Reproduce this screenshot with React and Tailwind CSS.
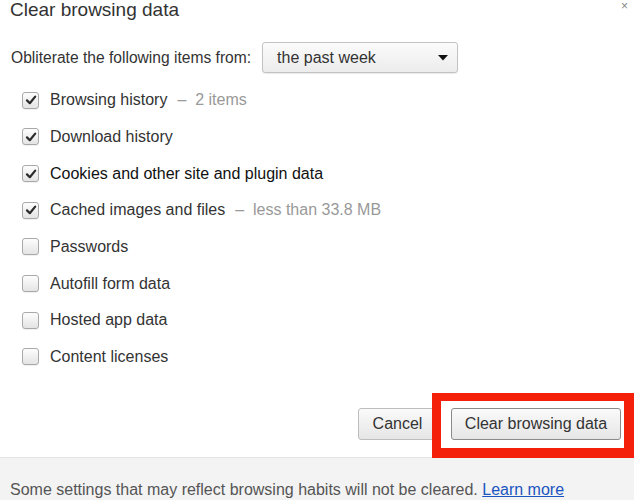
import { useState } from 'react';

const ITEMS = [
  { label: 'Browsing history', note: '2 items', checked: true },
  { label: 'Download history', checked: true },
  { label: 'Cookies and other site and plugin data', checked: true, dark: true },
  { label: 'Cached images and files', note: 'less than 33.8 MB', checked: true },
  { label: 'Passwords', checked: false },
  { label: 'Autofill form data', checked: false },
  { label: 'Hosted app data', checked: false },
  { label: 'Content licenses', checked: false },
];

function Checkbox({ checked }) {
  return (
    <span className="w-[17px] h-[17px] shrink-0 rounded-[3px] border border-[#a9a9a9] bg-gradient-to-b from-[#fdfdfd] to-[#e4e4e4] shadow-[0_1px_0_rgba(0,0,0,0.06)] flex items-center justify-center">
      {checked && (
        <svg width="12" height="12" viewBox="0 0 12 12">
          <path d="M2 6.4 L4.8 9.2 L10.2 2.6" fill="none" stroke="#2b2b2b" strokeWidth="2.2" strokeLinecap="round" strokeLinejoin="round" />
        </svg>
      )}
    </span>
  );
}

export default function App() {
  const [items] = useState(ITEMS);

  return (
    <div
      className="relative w-[634px] h-[500px] overflow-hidden bg-white flex flex-col text-[#333]"
      style={{ fontFamily: '"Liberation Sans", Arial, sans-serif' }}
    >
      {/* title */}
      <div className="flex items-start justify-between pl-[10px] pr-[6px] h-[18px]">
        <h1 className="text-[19px] leading-[20px] text-[#333]">Clear browsing data</h1>
        <span className="text-[12px] leading-[12px] text-[#888]">×</span>
      </div>

      {/* time range */}
      <div className="flex items-center mt-[24px] pl-[11px] h-[31px]">
        <span className="text-[15.6px] mr-[11px]">Obliterate the following items from:</span>
        <div className="w-[196px] h-[31px] rounded-[3px] border border-[#c2c2c2] bg-gradient-to-b from-[#fbfbfb] to-[#ececec] shadow-[0_1px_1px_rgba(0,0,0,0.08)] flex items-center justify-between pl-[14px] pr-[9px]">
          <span className="text-[16px]">the past week</span>
          <svg width="10" height="6" viewBox="0 0 10 6">
            <path d="M0 0 H10 L5 5.5 Z" fill="#111" />
          </svg>
        </div>
      </div>

      {/* items */}
      <div className="flex flex-col mt-[9px]">
        {items.map((it) => (
          <label key={it.label} className="flex items-center h-[36.67px] pl-[22px]">
            <Checkbox checked={it.checked} />
            <span className={`ml-[11px] text-[16px] ${it.dark ? 'text-[#111]' : 'text-[#333]'}`}>{it.label}</span>
            {it.note && <span className="ml-[10px] text-[16px] text-[#999]">–&nbsp; {it.note}</span>}
          </label>
        ))}
      </div>

      {/* buttons */}
      <div className="flex justify-end gap-[14px] pr-[13px] mt-auto mb-[17px]">
        <button className="w-[79px] h-[32px] rounded-[3px] border border-[#bdbdbd] bg-gradient-to-b from-[#fafafa] to-[#e6e6e6] text-[16px] text-[#333]">
          Cancel
        </button>
        <button className="w-[170px] h-[32px] rounded-[3px] border border-[#8a8a8a] bg-gradient-to-b from-[#fafafa] to-[#e6e6e6] text-[16px] text-[#333]">
          Clear browsing data
        </button>
      </div>

      {/* footer */}
      <div className="h-[43px] shrink-0 border-t border-[#e4e4e4] bg-[#f3f3f3] flex items-end pl-[10px]">
        <p className="text-[16px] leading-[20px] text-[#555]">
          Some settings that may reflect browsing habits will not be cleared.{' '}
          <a className="text-[#1a55c0] underline">Learn more</a>
        </p>
      </div>

      {/* highlight */}
      <div className="absolute left-[432px] top-[393px] w-[210px] h-[65px] border-[#f5200a] border-t-[8px] border-l-[9px] border-b-[10px] border-r-[18px]" />
    </div>
  );
}
